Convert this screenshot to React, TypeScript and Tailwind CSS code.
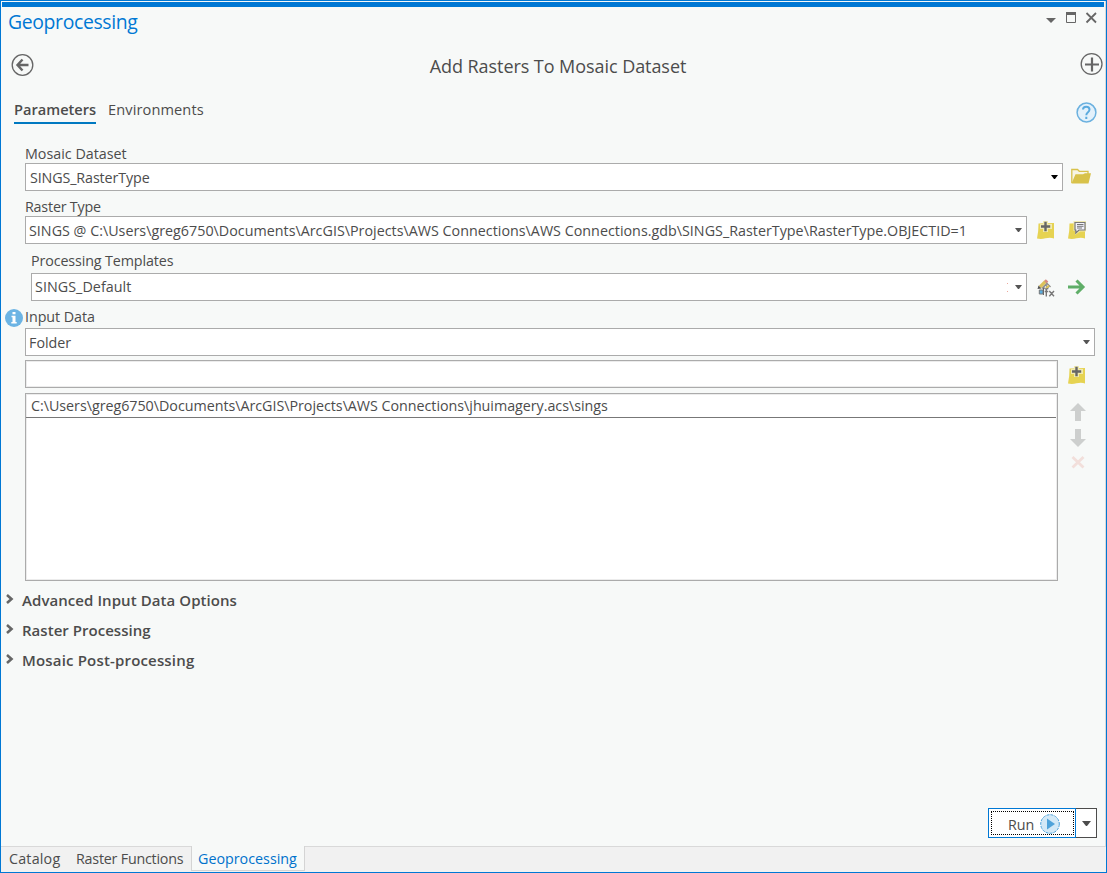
import type { ReactNode } from "react";

function Caret({ className = "" }: { className?: string }) {
  return (
    <svg className={`shrink-0 ${className}`} width="7" height="4" viewBox="0 0 7 4" fill="currentColor">
      <path d="M0 0h7L4 4H3z" />
    </svg>
  );
}

function Combo({ text, className = "", textClass = "", caretClass = "mr-[4px] text-[#555]", extra }: { text: string; className?: string; textClass?: string; caretClass?: string; extra?: ReactNode }) {
  return (
    <div className={`flex h-7 shrink-0 items-center justify-between border border-[#ababab] bg-white ${className}`}>
      <span className={textClass}>{text}</span>
      <span className="flex items-center">
        {extra}
        <Caret className={caretClass} />
      </span>
    </div>
  );
}

function Label({ text, className = "" }: { text: string; className?: string }) {
  return <label className={`block h-5 shrink-0 ${className}`}>{text}</label>;
}

function Sheet() {
  return <path d="M1.500 2.500L17 2V17.500Q13.500 16 8.500 17.300Q4 18.500 0 17.500Q1.600 10 1.500 2.500Z" fill="#e6d352" />;
}

function AddNoteIcon() {
  return (
    <svg width="18" height="19" viewBox="0 0 18 19">
      <Sheet />
      <path d="M6 0h5v3h4v5h-4v3h-5V8h-3V3h3z" fill="#f1eab0" />
      <path d="M8.500 .8V10.200M4 5.500H13.200" stroke="#666" strokeWidth="2.400" />
    </svg>
  );
}

function CommentNoteIcon() {
  return (
    <svg width="18" height="19" viewBox="0 0 18 19">
      <Sheet />
      <path d="M5.500 0H18V10.500H12L7 14V10H5.500Z" fill="#f1eab0" />
      <path d="M7 1.500H17V9H11L7.800 12V9H7Z" fill="#f2f2fa" stroke="#777" strokeWidth="1.200" />
      <path d="M9 3.500H15.500M9 5.300H15.500M9 7H14" stroke="#777" strokeWidth="1" />
    </svg>
  );
}

function FolderIcon() {
  return (
    <svg width="20" height="16" viewBox="0 0 20 16">
      <path d="M.8 15V1.500H6.500L8.300 3.300H17V6" fill="#f7f5e4" stroke="#d8c24a" strokeWidth="1.300" />
      <path d="M4.500 6.200H12L14 5.200H20L17.500 15.500H.5Z" fill="#d8c24a" />
    </svg>
  );
}

function EditFunctionIcon() {
  return (
    <svg width="18" height="18" viewBox="0 0 18 18" fill="none">
      <path d="M3 8L8.500 2.500" stroke="#dcc25a" strokeWidth="3.200" />
      <path d="M8 1.200L10.500 3.500" stroke="#d98a80" strokeWidth="2.400" />
      <path d="M.5 10L1.500 6.500L4.500 9.500Z" fill="#555" />
      <path d="M5 9.500L10 4.500L13.500 8M6.500 8.500L9.500 10.500M9 6.500L11.500 9" stroke="#888" strokeWidth="1.400" />
      <path d="M9 9.500L12 6.500" stroke="#dcc25a" strokeWidth="2" />
      <path d="M2.300 11H6V15H2.300Z" fill="#5aaee0" stroke="#777" />
      <path d="M6.500 9V16" stroke="#666" />
      <path d="M11.300 9.800Q9.300 9.200 9.300 11V17.500M7.700 12.500H11.200M12.300 12L17 17.200M17 12L12.300 17.200" stroke="#777" strokeWidth="1.400" />
    </svg>
  );
}

function Section({ text, className = "" }: { text: string; className?: string }) {
  return (
    <div className="flex h-[30px] shrink-0 items-center">
      <svg className="mr-[8px] mb-[3px] ml-[5px]" width="8" height="10" viewBox="0 0 8 10" fill="none" stroke="#666" strokeWidth="2.600">
        <path d="M1 1L5.500 5L1 9" />
      </svg>
      <span className={`text-[15px] font-semibold ${className}`}>{text}</span>
    </div>
  );
}

export default function App() {
  return (
    <div className="flex h-[873px] w-[1107px] flex-col overflow-hidden border border-[#0078d4] bg-[#f7f9f8] font-['Open_Sans','Noto_Sans',sans-serif] text-[14.3px] leading-5 whitespace-nowrap text-[#4c4c4c]">
      <div className="flex h-[846px] shrink-0 flex-col border-r border-b border-[#d9d9d9]">
        <div className="mt-px mr-px ml-px h-[5px] shrink-0 bg-[#0078d4]" />
        <header className="flex h-[30px] shrink-0 items-center justify-between pr-[7px] pl-[7px]">
          <h1 className="text-[19.4px] tracking-[-0.35px] text-[#0078d4]">Geoprocessing</h1>
          <svg width="52" height="14" viewBox="0 0 52 14" className="mb-[9px]">
            <path d="M0 7h10L5 12z" fill="#666" />
            <path d="M20.500 1.500h9v10h-9z" fill="none" stroke="#666" />
            <path d="M20 1h10v3H20z" fill="#666" />
            <path d="M40.500 2L50 11.500M50 2L40.500 11.500" stroke="#666" strokeWidth="1.800" />
          </svg>
        </header>
        <div className="flex h-[57px] shrink-0 items-center justify-between pr-px pl-[10px]">
          <svg className="mb-px" width="24" height="24" viewBox="0 0 24 24" fill="none" stroke="#666">
            <circle cx="11.500" cy="12" r="10.300" strokeWidth="1.300" />
            <path d="M17.500 12H7M11.500 6.500L6.500 12L11.500 17.500" strokeWidth="2.400" />
          </svg>
          <h2 className="ml-px text-[18px] tracking-[-0.06px]">Add Rasters To Mosaic Dataset</h2>
          <svg className="mb-[3px]" width="24" height="24" viewBox="0 0 24 24" fill="none" stroke="#666">
            <circle cx="11.600" cy="12" r="10.400" strokeWidth="1.300" />
            <path d="M5 12.500H19M12 5.500V19.500" strokeWidth="2.200" />
          </svg>
        </div>
        <nav className="flex h-[49px] shrink-0 items-start pt-[5px] pl-[13px]">
          <span className="h-[25px] w-[82px] border-b-2 border-[#0079c1] text-[14.6px] font-semibold">Parameters</span>
          <span className="ml-3 text-[14.6px] tracking-[0.1px]">Environments</span>
          <span className="flex-1" />
          <svg className="mt-[3px] mr-[8px]" width="21" height="21" viewBox="0 0 21 21" fill="none">
            <circle cx="10.500" cy="10.500" r="9.400" fill="#e3f1fb" stroke="#6bb1df" strokeWidth="1.500" />
            <path d="M7 7.500Q7 4.700 10.200 4.700Q13.500 4.700 13.500 7.500Q13.500 9 12 10.200Q10.300 11.500 10.300 13.300M10.300 14.800V17" stroke="#5aaade" strokeWidth="2" />
          </svg>
        </nav>

        <div className="flex h-[20px] shrink-0 pt-px pl-6">
          <Label text="Mosaic Dataset" />
        </div>
        <div className="flex shrink-0 items-center pl-6">
          <Combo text="SINGS_RasterType" className="w-[1038px]" textClass="pt-[2px] pl-1 tracking-[-0.12px]" caretClass="mr-[4px] text-black" />
          <span className="-mt-[3px] ml-[8px]"><FolderIcon /></span>
        </div>
        <div className="flex h-[25px] shrink-0 pt-[6px] pl-6">
          <Label text="Raster Type" className="tracking-[-0.2px]" />
        </div>
        <div className="flex shrink-0 items-center pl-6">
          <Combo text="SINGS @ C:\Users\greg6750\Documents\ArcGIS\Projects\AWS Connections\AWS Connections.gdb\SINGS_RasterType\RasterType.OBJECTID=1" className="w-[1002px]" textClass="pt-[2px] pl-[3px] tracking-[0.01px]" />
          <span className="ml-[10px]"><AddNoteIcon /></span>
          <span className="ml-[13px]"><CommentNoteIcon /></span>
        </div>
        <div className="flex h-[29px] shrink-0 items-start pt-[7px] pl-[30px]">
          <Label text="Processing Templates" className="tracking-[-0.12px]" />
        </div>
        <div className="flex shrink-0 items-center pl-[30px]">
          <Combo
            text="SINGS_Default"
            className="w-[996px]"
            textClass="pl-[3px] tracking-[0.05px]"
            extra={<span className="mr-[7px] flex flex-col gap-[7px]"><i className="size-px bg-[#eda89c]" /><i className="size-px bg-[#eda89c]" /></span>}
          />
          <span className="mt-px ml-[10px]"><EditFunctionIcon /></span>
          <svg className="ml-[12px]" width="19" height="16" viewBox="0 0 19 16" fill="none" stroke="#5fae68" strokeWidth="3">
            <path d="M1 8H16M9.500 1.500L16 8L9.500 14.500" />
          </svg>
        </div>
        <div className="flex h-[27px] shrink-0 items-start pt-[6px] pl-[4px]">
          <svg className="mt-[2px] mr-[2px]" width="18" height="18" viewBox="0 0 18 18" fill="#fff">
            <circle cx="9" cy="9" r="9" fill="#6cb4e4" />
            <path d="M7.500 3h3v2.300h-3zM6.500 6.800h4v6.200h1.200v1.500H6.300V13h1.200V8.300h-1z" />
          </svg>
          <Label text="Input Data" className="tracking-[-0.05px]" />
        </div>
        <div className="flex shrink-0 pl-6">
          <Combo text="Folder" className="w-[1070px]" textClass="pt-[2px] pl-[3px]" />
        </div>
        <div className="mt-1 flex shrink-0 items-center pl-6">
          <div className="h-7 w-[1033px] border border-[#ababab] bg-white shadow-[inset_0_0_0_1px_#ececec]" />
          <span className="mt-[2px] ml-[10px]"><AddNoteIcon /></span>
        </div>
        <div className="mt-[5px] flex shrink-0 pl-6">
          <div className="h-[188px] w-[1033px] border border-[#ababab] bg-white shadow-[inset_0_0_0_1px_#ececec]">
            <div className="mr-px h-6 border-b border-[#777] pt-[2px] pl-[5px] tracking-[-0.03px]">C:\Users\greg6750\Documents\ArcGIS\Projects\AWS Connections\jhuimagery.acs\sings</div>
          </div>
          <div className="mt-[10px] ml-[11.5px] flex flex-col items-center gap-2">
            <svg width="16" height="18" viewBox="0 0 16 18" fill="#cdcfce"><path d="M8 0L16 8H11V18H5V8H0Z" /></svg>
            <svg width="16" height="18" viewBox="0 0 16 18" fill="#cdcfce"><path d="M8 18L16 10H11V0H5V10H0Z" /></svg>
            <svg width="14" height="14" viewBox="0 0 14 14" stroke="#f2dfdb" strokeWidth="2.800"><path d="M1.500 2L12.500 12.500M12.500 2L1.500 12.500" /></svg>
          </div>
        </div>
        <div className="mt-[4px] flex flex-col">
          <Section text="Advanced Input Data Options" className="tracking-[0.07px]" />
          <Section text="Raster Processing" className="tracking-[0.03px]" />
          <Section text="Mosaic Post-processing" className="tracking-[0.17px]" />
        </div>
        <div className="mt-auto mr-[8px] mb-[8px] flex h-[30px] shrink-0 justify-end">
          <button className="w-[88px] border border-[#0078d4] bg-white py-[2px] pr-px pl-[2px]">
            <span className="flex h-full items-center border border-dotted border-black pl-4">
              <span className="mt-[3px]">Run</span>
              <svg className="mt-px ml-[6px]" width="20" height="20" viewBox="0 0 20 20">
                <circle cx="10" cy="10" r="9.300" fill="#d3e9f7" stroke="#4fa3da" strokeDasharray="3 1" />
                <path d="M7 4.500L15 10L7 15.500Z" fill="#4fa3da" />
              </svg>
            </span>
          </button>
          <button className="flex w-[21px] items-center justify-center border border-l-0 border-[#4c4c4c] bg-white">
            <svg width="9" height="5" viewBox="0 0 9 5" fill="#4c4c4c"><path d="M0 0h9L5 5H4z" /></svg>
          </button>
        </div>
      </div>
      <footer className="flex h-[25px] shrink-0 bg-[#f1f1f1]">
        <span className="w-[75px] pt-[2px] pl-[8px] tracking-[0.2px]">Catalog</span>
        <span className="w-[115px] pt-[2px] tracking-[-0.22px]">Raster Functions</span>
        <span className="-mt-px h-[25px] w-[114px] border border-t-0 border-[#d4d4d4] bg-[#f7f9f8] pt-[3px] pl-[6px] text-[#0072cc]">Geoprocessing</span>
      </footer>
    </div>
  );
}
